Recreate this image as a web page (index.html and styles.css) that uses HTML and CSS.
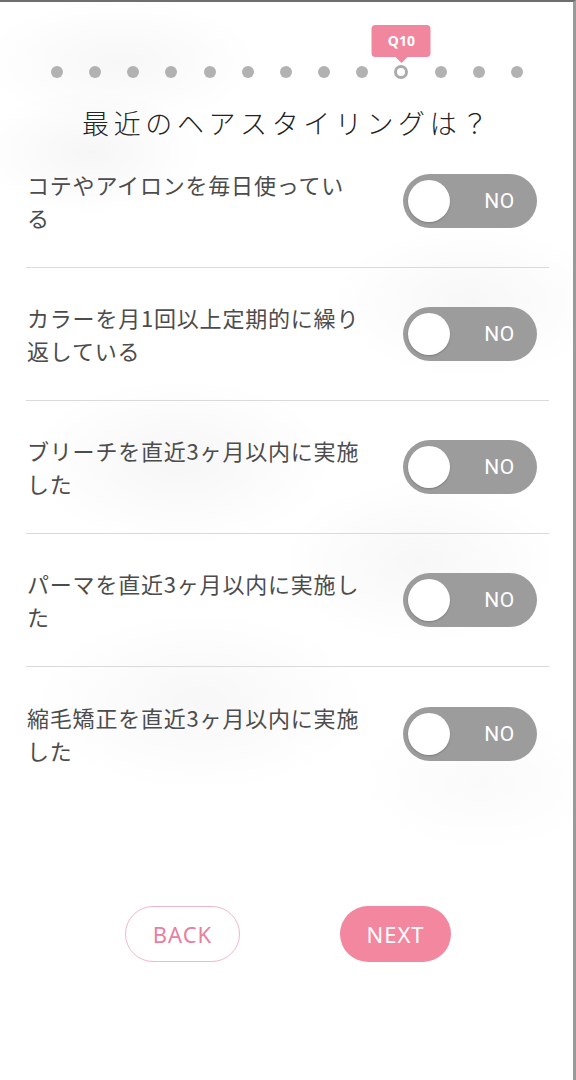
FILE: index.html
```html
<!DOCTYPE html>
<html lang="ja">
<head>
<meta charset="utf-8">
<title>Q10</title>
<link rel="stylesheet" href="styles.css">
</head>
<body>
<div class="page">
  <header class="head">
    <div class="progress">
      <span class="dot"></span><span class="dot"></span><span class="dot"></span>
      <span class="dot"></span><span class="dot"></span><span class="dot"></span>
      <span class="dot"></span><span class="dot"></span><span class="dot"></span>
      <span class="dot current"><span class="badge">Q10</span></span>
      <span class="dot"></span><span class="dot"></span><span class="dot"></span>
    </div>
    <h1 class="title">最近のヘアスタイリングは？</h1>
  </header>
  <ul class="list">
    <li class="row"><p class="label">コテやアイロンを毎日使っている</p><div class="toggle"><span class="knob"></span><span class="state">NO</span></div></li>
    <li class="row"><p class="label">カラーを月1回以上定期的に繰り返している</p><div class="toggle"><span class="knob"></span><span class="state">NO</span></div></li>
    <li class="row"><p class="label">ブリーチを直近3ヶ月以内に実施した</p><div class="toggle"><span class="knob"></span><span class="state">NO</span></div></li>
    <li class="row"><p class="label">パーマを直近3ヶ月以内に実施した</p><div class="toggle"><span class="knob"></span><span class="state">NO</span></div></li>
    <li class="row last"><p class="label">縮毛矯正を直近3ヶ月以内に実施した</p><div class="toggle"><span class="knob"></span><span class="state">NO</span></div></li>
  </ul>
  <div class="actions">
    <button class="btn back">BACK</button>
    <button class="btn next">NEXT</button>
  </div>
</div>
</body>
</html>
```

FILE: styles.css
```css
* { box-sizing: border-box; }
html, body { margin: 0; padding: 0; }
body {
  width: 576px;
  height: 1080px;
  overflow: hidden;
  background: #fff;
  font-family: "Noto Sans CJK JP", "Noto Sans", sans-serif;
}
.page {
  height: 1080px;
  border-top: 2px solid #6e6e6e;
  border-right: 3px solid #9a9a9a;
  padding: 0 24px 0 26px;
  background:
    radial-gradient(ellipse 200px 90px at 120px 60px, rgba(0,0,0,0.03), transparent 70%),
    radial-gradient(ellipse 160px 90px at 90px 150px, rgba(0,0,0,0.035), transparent 70%),
    radial-gradient(ellipse 200px 110px at 470px 300px, rgba(0,0,0,0.03), transparent 70%),
    radial-gradient(ellipse 220px 120px at 180px 460px, rgba(0,0,0,0.035), transparent 70%),
    radial-gradient(ellipse 200px 120px at 420px 560px, rgba(0,0,0,0.03), transparent 70%),
    radial-gradient(ellipse 240px 130px at 200px 700px, rgba(0,0,0,0.03), transparent 70%),
    radial-gradient(ellipse 180px 100px at 480px 780px, rgba(0,0,0,0.02), transparent 70%),
    #fff;
}
.head { padding-top: 64px; }
.progress {
  display: flex;
  justify-content: space-between;
  align-items: center;
  margin: 0 26px 0 25px;
  height: 12px;
}
.dot {
  width: 12px;
  height: 12px;
  border-radius: 50%;
  background: #b2b2b2;
  position: relative;
}
.dot.current {
  width: 14px;
  height: 14px;
  background: #fff;
  border: 3px solid #ababab;
}
.badge {
  position: absolute;
  left: 50%;
  bottom: 19px;
  transform: translateX(-50%);
  width: 59px;
  height: 32px;
  border-radius: 4px;
  background: #f0879f;
  color: #fff;
  font-family: "Noto Sans", sans-serif;
  font-weight: 700;
  font-size: 14px;
  line-height: 32px;
  text-align: center;
}
.badge::after {
  content: "";
  position: absolute;
  left: 50%;
  bottom: -6px;
  margin-left: -6px;
  border-left: 6px solid transparent;
  border-right: 6px solid transparent;
  border-top: 6px solid #f0879f;
}
.title {
  margin: 33px 0 0;
  line-height: 24px;
  height: 24px;
  text-align: center;
  font-size: 27px;
  font-weight: 300;
  letter-spacing: 4.6px;
  color: #222;
}
.list { list-style: none; margin: 0; padding: 0; }
.row {
  display: flex;
  align-items: center;
  justify-content: space-between;
  height: 133px;
  border-bottom: 1px solid #dadada;
  padding: 0 12px 0 1px;
}
.row.last { border-bottom: none; }
.label {
  margin: 0;
  width: 334px;
  font-size: 22px;
  line-height: 33px;
  letter-spacing: 0.8px;
  color: #4c4c4c;
}
.toggle {
  width: 134px;
  height: 54px;
  border-radius: 27px;
  background: #9c9c9c;
  display: flex;
  align-items: center;
  padding-left: 5px;
}
.knob {
  width: 42px;
  height: 42px;
  border-radius: 50%;
  background: #fff;
  box-shadow: 0 1px 2px rgba(0,0,0,0.2);
}
.state {
  flex: 1;
  text-align: center;
  padding-left: 12px;
  color: #fff;
  font-family: Roboto, "Noto Sans", sans-serif;
  font-size: 21px;
  letter-spacing: 0.5px;
}
.actions {
  display: flex;
  justify-content: center;
  gap: 100px;
  margin-top: 106px;
  padding-left: 1px;
}
.btn {
  height: 56px;
  border-radius: 28px;
  font-family: "Noto Sans", sans-serif;
  font-size: 22px;
  letter-spacing: 1px;
  padding: 0;
}
.btn.back {
  width: 115px;
  background: #fff;
  border: 1px solid #f2b6c5;
  color: #e9809e;
}
.btn.next {
  width: 111px;
  background: #f2879f;
  border: none;
  color: #fff;
}
```
